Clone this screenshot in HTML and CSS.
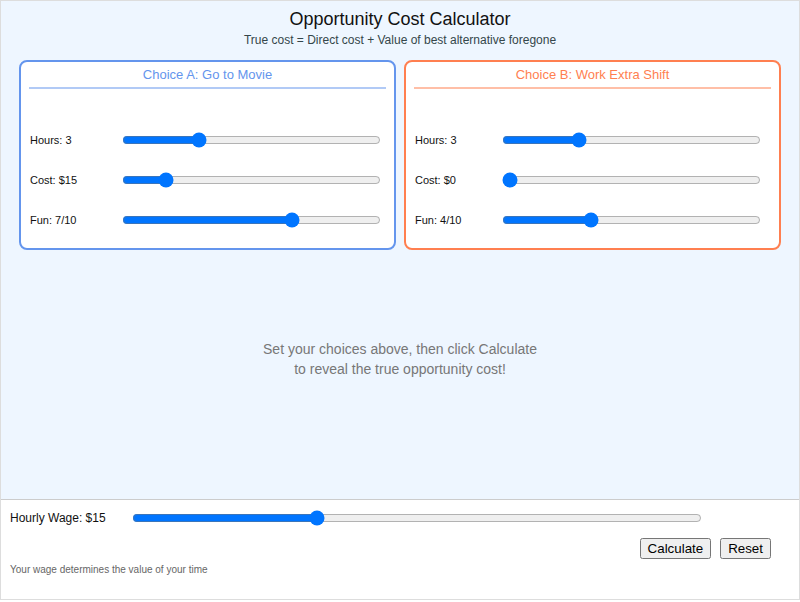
FILE: index.html
```html
<!DOCTYPE html>
<html>
<head>
<meta charset="utf-8">
<link rel="stylesheet" href="styles.css">
</head>
<body>
<div class="app">
  <div class="main">
    <h1 class="title">Opportunity Cost Calculator</h1>
    <p class="subtitle">True cost = Direct cost + Value of best alternative foregone</p>
    <div class="cards">
      <div class="card card-a">
        <div class="card-head">Choice A: Go to Movie</div>
        <div class="rows">
          <div class="row"><span class="lbl">Hours: 3</span><input type="range" min="1" max="8" value="3"></div>
          <div class="row"><span class="lbl">Cost: $15</span><input type="range" min="0" max="100" value="15"></div>
          <div class="row"><span class="lbl">Fun: 7/10</span><input type="range" min="1" max="10" value="7"></div>
        </div>
      </div>
      <div class="card card-b">
        <div class="card-head">Choice B: Work Extra Shift</div>
        <div class="rows">
          <div class="row"><span class="lbl">Hours: 3</span><input type="range" min="1" max="8" value="3"></div>
          <div class="row"><span class="lbl">Cost: $0</span><input type="range" min="0" max="100" value="0"></div>
          <div class="row"><span class="lbl">Fun: 4/10</span><input type="range" min="1" max="10" value="4"></div>
        </div>
      </div>
    </div>
    <p class="hint">Set your choices above, then click Calculate<br>to reveal the true opportunity cost!</p>
  </div>
  <div class="panel">
    <div class="wage-row">
      <span class="wage-lbl">Hourly Wage: $15</span>
      <input class="wage" type="range" min="7" max="32" value="15">
    </div>
    <div class="buttons">
      <button>Calculate</button>
      <button>Reset</button>
    </div>
    <p class="note">Your wage determines the value of your time</p>
  </div>
</div>
</body>
</html>
```
FILE: styles.css
```css
html, body {
  margin: 0;
  padding: 0;
  background: #fff;
}
.app {
  width: 800px;
  height: 600px;
  box-sizing: border-box;
  border: 1px solid #ddd;
  display: flex;
  flex-direction: column;
  font-family: "Liberation Sans", Arial, sans-serif;
}
.main {
  flex: 1;
  background: #eef6ff;
  padding: 8px 18px 0;
}
.title {
  margin: 0;
  font-size: 18px;
  line-height: 20px;
  font-weight: normal;
  text-align: center;
  color: #111;
}
.subtitle {
  margin: 4px 0 0;
  font-size: 12px;
  line-height: 14px;
  text-align: center;
  color: #34464a;
}
.cards {
  margin-top: 13px;
  display: flex;
  gap: 8px;
}
.card {
  flex: 1;
  height: 190px;
  box-sizing: border-box;
  border: 2px solid #6495ed;
  border-radius: 8px;
  background: #fff;
}
.card-b {
  border-color: #ff7f50;
}
.card-head {
  margin: 0 8px;
  padding: 5px 0 4px;
  font-size: 13px;
  line-height: 16px;
  text-align: center;
  color: #6495ed;
  border-bottom: 2px solid #b1caf6;
}
.card-b .card-head {
  color: #ff7f50;
  border-bottom-color: #ffbfa7;
}
.rows {
  padding-top: 31px;
}
.row {
  height: 40px;
  display: flex;
  align-items: center;
  padding-left: 9px;
}
.lbl {
  width: 92px;
  font-size: 11px;
  color: #111;
}
.card-b .lbl {
  width: 87px;
}
.row input {
  width: 259px;
  margin: 0;
}
.hint {
  margin: 89px 0 0;
  text-align: center;
  font-size: 14px;
  line-height: 20px;
  color: #777;
}
.panel {
  height: 100px;
  box-sizing: border-box;
  border-top: 1px solid #ccc;
  background: #fff;
  padding: 8px 9px 0;
}
.wage-row {
  height: 20px;
  display: flex;
  align-items: center;
}
.wage-lbl {
  width: 120px;
  font-size: 12px;
  color: #111;
}
.wage {
  width: 570px;
  margin: 0 0 0 2px;
}
.buttons {
  margin-top: 10px;
  display: flex;
  justify-content: flex-end;
  gap: 9px;
  padding-right: 19px;
}
.buttons button {
  margin: 0;
}
.note {
  margin: 5px 0 0;
  font-size: 10px;
  line-height: 12px;
  color: #666;
}
```
